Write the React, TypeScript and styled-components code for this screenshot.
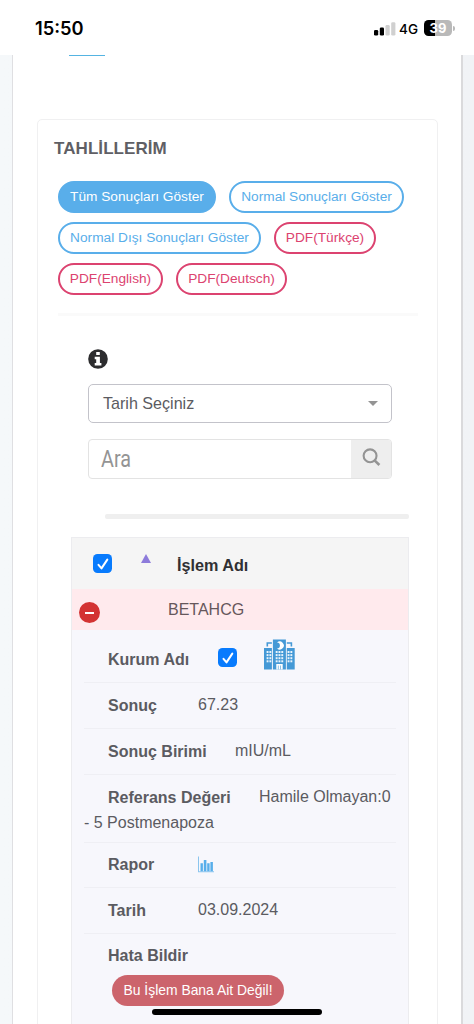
import React from "react";
import styled, { createGlobalStyle } from "styled-components";

const GlobalStyle = createGlobalStyle`
  * { box-sizing: border-box; }
  body { margin: 0; background: #fff; font-family: "Liberation Sans", Arial, sans-serif; color: #5b5b61; }
`;

const Screen = styled.div`
  position: relative;
  width: 474px;
  height: 1024px;
  overflow: hidden;
  display: flex;
  flex-direction: column;
  background: #fff;
`;

const StatusBar = styled.header`
  height: 55px;
  flex: none;
  display: flex;
  align-items: center;
  justify-content: space-between;
  padding: 2px 19px 0 35px;
  font-family: Inter, sans-serif;
  color: #000;
`;

const Clock = styled.span`
  font-size: 18.3px;
  font-weight: 600;
  margin-top: -1px;
`;

const StatusIcons = styled.div`
  display: flex;
  align-items: center;
`;

const Network = styled.span`
  font-size: 13.5px;
  font-weight: 500;
  margin: 0 6px 0 3px;
`;

const Battery = styled.div`
  width: 28px;
  height: 16px;
  margin-top: -1px;
  border-radius: 4.5px;
  background: linear-gradient(90deg, #000 40%, #b9b9b9 40%);
  color: #fff;
  font-size: 13px;
  font-weight: 700;
  line-height: 16px;
  text-align: center;
`;

const BatteryTip = styled.div`
  width: 2px;
  height: 5px;
  margin-left: 1px;
  border-radius: 0 2px 2px 0;
  background: #b9b9b9;
`;

const Page = styled.main`
  flex: 1;
  min-height: 0;
  padding: 0 11px 0 12px;
  background: linear-gradient(90deg, #f5f8fa 0, #f1f3f6 100%);
`;

const Panel = styled.section`
  height: 100%;
  padding: 0 23px 0 24px;
  background: #fff;
  border-left: 1px solid #dfdfe2;
  border-right: 2px solid #dadadc;
`;

const TabRemnant = styled.div`
  width: 36px;
  height: 1px;
  margin-left: 32px;
  background: #55b4e2;
`;

const Card = styled.section`
  height: 960px;
  margin-top: 63px;
  padding: 0 19px 0 16px;
  border: 1px solid #f0f0f1;
  border-radius: 5px;
`;

const Title = styled.h1`
  margin: 18px 0 0;
  height: 22px;
  line-height: 22px;
  font-size: 17px;
  font-weight: 700;
  letter-spacing: 0.07px;
  color: #5f5f65;
`;

const Filters = styled.div`
  display: flex;
  flex-wrap: wrap;
  gap: 9px 13px;
  margin: 21px 0 0 4px;
`;

const Pill = styled.button<{ $tone: string; $filled?: boolean; $width: number }>`
  width: ${(p) => p.$width}px;
  height: 32px;
  padding: 0 0 2px;
  border: 2px solid ${(p) => p.$tone};
  border-radius: 16px;
  background: ${(p) => (p.$filled ? p.$tone : "#fff")};
  color: ${(p) => (p.$filled ? "#fff" : p.$tone)};
  font: 13.7px "Liberation Sans", Arial, sans-serif;
  white-space: nowrap;
`;

const Divider = styled.div`
  height: 3px;
  margin: 18px 0 0 4px;
  background: #fafafa;
`;

const Controls = styled.div`
  display: flex;
  flex-direction: column;
  margin: 33px 27px 0 34px;
`;

const Select = styled.div`
  display: flex;
  align-items: center;
  justify-content: space-between;
  width: 304px;
  height: 39px;
  margin-top: 15px;
  padding: 0 13px 1px 14px;
  border: 1px solid #c3c3ca;
  border-radius: 5px;
  font-size: 16.1px;
`;

const Caret = styled.span`
  border: 5px solid transparent;
  border-top-color: #949494;
  border-bottom: 0;
`;

const SearchBox = styled.div`
  display: flex;
  width: 304px;
  height: 40px;
  margin-top: 16px;
  border: 1px solid #e3e3e3;
  border-radius: 4px;
  overflow: hidden;
`;

const SearchField = styled.div`
  flex: 1;
  padding-left: 12px;
  line-height: 39px;
  font-family: Roboto, sans-serif;
  font-size: 23px;
  color: #949494;
`;

const Condensed = styled.span`
  display: inline-block;
  transform: scaleX(0.86);
  transform-origin: left;
`;

const SearchAddon = styled.div`
  width: 40px;
  display: flex;
  align-items: center;
  justify-content: center;
  padding: 0 0 3px 1px;
  background: #eee;
`;

const ScrollTrack = styled.div`
  width: 304px;
  height: 5px;
  margin: 35px 0 0 51px;
  border-radius: 2px;
  background: #efefef;
`;

const Table = styled.div`
  width: 338px;
  height: 520px;
  margin: 18px 0 0 17px;
  border: 1px solid #ececef;
  border-bottom: 0;
  background: #f7f7fc;
`;

const HeaderRow = styled.div`
  display: flex;
  height: 51px;
  padding: 16px 0 0 21px;
  background: #f5f5f5;
`;

const Checkbox = styled.span<{ $offset?: number }>`
  display: flex;
  align-items: center;
  justify-content: center;
  flex: none;
  width: 19px;
  height: 19px;
  margin-top: ${(p) => p.$offset ?? 0}px;
  border-radius: 4.5px;
  background: #087bfd;
`;

const SortArrow = styled.span`
  width: 0;
  height: 0;
  margin-left: 29px;
  border: 5px solid transparent;
  border-bottom: 9px solid #8d7bdb;
  border-top: 0;
`;

const ColumnName = styled.strong`
  margin-left: 26px;
  line-height: 22px;
  font-size: 16.2px;
  color: #303033;
`;

const TestRow = styled.div`
  display: flex;
  height: 41px;
  padding: 10px 0 0 7px;
  background: #ffeaed;
`;

const Collapse = styled.span`
  display: flex;
  align-items: center;
  justify-content: center;
  width: 21px;
  height: 21px;
  margin-top: 3px;
  border-radius: 50%;
  background: #d33333;
  &::after { content: ""; width: 9px; height: 2px; background: #fff; }
`;

const TestName = styled.span`
  margin-left: 68px;
  line-height: 21px;
  font-size: 16px;
  color: #66575b;
`;

const Details = styled.div`
  padding: 0 12px;
`;

const DetailRow = styled.div<{ $height: number }>`
  height: ${(p) => p.$height}px;
  border-bottom: 1px solid #efeff4;
  font-size: 16px;
`;

const Line = styled.div<{ $top: number }>`
  display: flex;
  height: 26px;
  padding-left: 24px;
  margin: 0;
  border-top: ${(p) => p.$top}px solid transparent;
  box-sizing: content-box;
  line-height: 26px;
`;

const Label = styled.strong<{ $width: number }>`
  flex: none;
  width: ${(p) => p.$width}px;
  white-space: nowrap;
`;

const Value = styled.span`
  margin-top: -1px;
  white-space: nowrap;
`;

const Continuation = styled.div`
  line-height: 24px;
`;

const ReportButton = styled.button`
  display: block;
  width: 172px;
  height: 31px;
  margin: 6px 0 0 28px;
  padding: 0 0 2px;
  border: 0;
  border-radius: 16px;
  background: #cc646c;
  color: #fff;
  font: 13.9px "Liberation Sans", Arial, sans-serif;
`;

const HomeIndicator = styled.div`
  position: absolute;
  left: 152px;
  bottom: 9px;
  width: 170px;
  height: 6px;
  border-radius: 3px;
  background: #000;
`;

const HospitalSvg = styled.svg`
  margin: -8px 0 0 27px;
`;

const ChartSvg = styled.svg`
  margin-top: 4px;
`;

const Signal = () => (
  <svg width="22" height="14" viewBox="0 0 22 14">
    <rect x="0" y="8" width="4.2" height="5.5" rx="1.3" fill="#000" />
    <rect x="5.8" y="5.5" width="4.2" height="8" rx="1.3" fill="#000" />
    <rect x="11.5" y="3" width="4.2" height="10.5" rx="1.3" fill="#d0d0d0" />
    <rect x="17.2" y="0.3" width="4.2" height="13.2" rx="1.3" fill="#d0d0d0" />
  </svg>
);

const Info = () => (
  <svg width="20" height="20" viewBox="0 0 20 20">
    <circle cx="10" cy="10" r="9.8" fill="#2c2c2e" />
    <path d="M8.2 3h3.6v2.9H8.2zM6.7 7.7h5.2v6.4h1.5v2.5H6.7v-2.5h1.5v-3.9H6.7z" fill="#fff" />
  </svg>
);

const Magnifier = () => (
  <svg width="19" height="19" viewBox="0 0 20 20" fill="none" stroke="#949494">
    <circle cx="8.5" cy="8.2" r="6.8" strokeWidth="2.2" />
    <path d="M13.2 13L18.3 17.8" strokeWidth="2.8" />
  </svg>
);

const windows = (x: number, cols: number, y: number, rows: number) =>
  Array.from({ length: cols * rows }, (_, i) => (
    <rect
      key={`${x}-${i}`}
      x={x + (i % cols) * 2.8}
      y={y + Math.floor(i / cols) * 3.1}
      width="1.9"
      height="2"
      fill="#e9f4fc"
    />
  ));

const Hospital = () => (
  <HospitalSvg width="31" height="31" viewBox="0 0 31 31">
    <path d="M0 9h7.9v21.5H0zM22.8 9h7.9v21.5h-7.9zM8.9 0.5h13v30h-13z" fill="#4599d6" />
    <path d="M3.3 7.5V4h4.6M27.4 7.5V4h-4.6" fill="none" stroke="#4599d6" strokeWidth="1.6" />
    <path d="M13 3.6a4 4 0 1 1 0 5.8a2.9 2.9 0 1 0 0-5.8z" fill="#fff" />
    {windows(2.6, 2, 12, 4)}
    {windows(23.6, 2, 12, 4)}
    {windows(11.7, 3, 12, 4)}
    <path d="M12.3 25h6.4v5.5h-1.8v-4h-.6v4h-1.8v-4h-.6v4h-1.6z" fill="#fff" />
  </HospitalSvg>
);

const Chart = () => (
  <ChartSvg width="17" height="17" viewBox="0 0 17 17" fill="#58aeea">
    <path d="M0 0.5h1v14.8h15v1H0z" fill="#8bc5ee" />
    <path d="M2.5 7.3h2.4v8H2.5zM5.8 4h2.6v11.3H5.8zM9.2 7.3h2.4v8H9.2zM12.4 6h2.5v9.3h-2.5z" />
  </ChartSvg>
);

const Checked = ({ offset = 0 }: { offset?: number }) => (
  <Checkbox $offset={offset}>
    <svg width="18" height="18" viewBox="0 0 18 18" fill="none" stroke="#fff" strokeWidth="2" strokeLinecap="round" strokeLinejoin="round">
      <path d="M4.5 9.8l3 3.6L13.3 4.6" />
    </svg>
  </Checkbox>
);

const blue = "#59aeea";
const red = "#dc4370";

export default function App() {
  return (
    <Screen>
      <GlobalStyle />
      <StatusBar>
        <Clock>15:50</Clock>
        <StatusIcons>
          <Signal />
          <Network>4G</Network>
          <Battery>39</Battery>
          <BatteryTip />
        </StatusIcons>
      </StatusBar>
      <Page>
        <Panel>
          <TabRemnant />
          <Card>
            <Title>TAHLİLLERİM</Title>
            <Filters>
              <Pill $tone={blue} $filled $width={158}>Tüm Sonuçları Göster</Pill>
              <Pill $tone={blue} $width={175}>Normal Sonuçları Göster</Pill>
              <Pill $tone={blue} $width={203}>Normal Dışı Sonuçları Göster</Pill>
              <Pill $tone={red} $width={102}>PDF(Türkçe)</Pill>
              <Pill $tone={red} $width={105}>PDF(English)</Pill>
              <Pill $tone={red} $width={111}>PDF(Deutsch)</Pill>
            </Filters>
            <Divider />
            <Controls>
              <Info />
              <Select>
                <span>Tarih Seçiniz</span>
                <Caret />
              </Select>
              <SearchBox>
                <SearchField><Condensed>Ara</Condensed></SearchField>
                <SearchAddon><Magnifier /></SearchAddon>
              </SearchBox>
            </Controls>
            <ScrollTrack />
            <Table>
              <HeaderRow>
                <Checked />
                <SortArrow />
                <ColumnName>İşlem Adı</ColumnName>
              </HeaderRow>
              <TestRow>
                <Collapse />
                <TestName>BETAHCG</TestName>
              </TestRow>
              <Details>
                <DetailRow $height={53}>
                  <Line $top={17}>
                    <Label $width={110}>Kurum Adı</Label>
                    <Checked offset={1} />
                    <Hospital />
                  </Line>
                </DetailRow>
                <DetailRow $height={46}>
                  <Line $top={10}><Label $width={90}>Sonuç</Label><Value>67.23</Value></Line>
                </DetailRow>
                <DetailRow $height={46}>
                  <Line $top={10}><Label $width={127}>Sonuç Birimi</Label><Value>mIU/mL</Value></Line>
                </DetailRow>
                <DetailRow $height={68}>
                  <Line $top={10}><Label $width={151}>Referans Değeri</Label><Value>Hamile Olmayan:0</Value></Line>
                  <Continuation>- 5 Postmenapoza</Continuation>
                </DetailRow>
                <DetailRow $height={45}>
                  <Line $top={9}><Label $width={90}>Rapor</Label><Chart /></Line>
                </DetailRow>
                <DetailRow $height={46}>
                  <Line $top={10}><Label $width={90}>Tarih</Label><Value>03.09.2024</Value></Line>
                </DetailRow>
                <Line $top={9}><Label $width={90}>Hata Bildir</Label></Line>
                <ReportButton>Bu İşlem Bana Ait Değil!</ReportButton>
              </Details>
            </Table>
          </Card>
        </Panel>
      </Page>
      <HomeIndicator />
    </Screen>
  );
}
